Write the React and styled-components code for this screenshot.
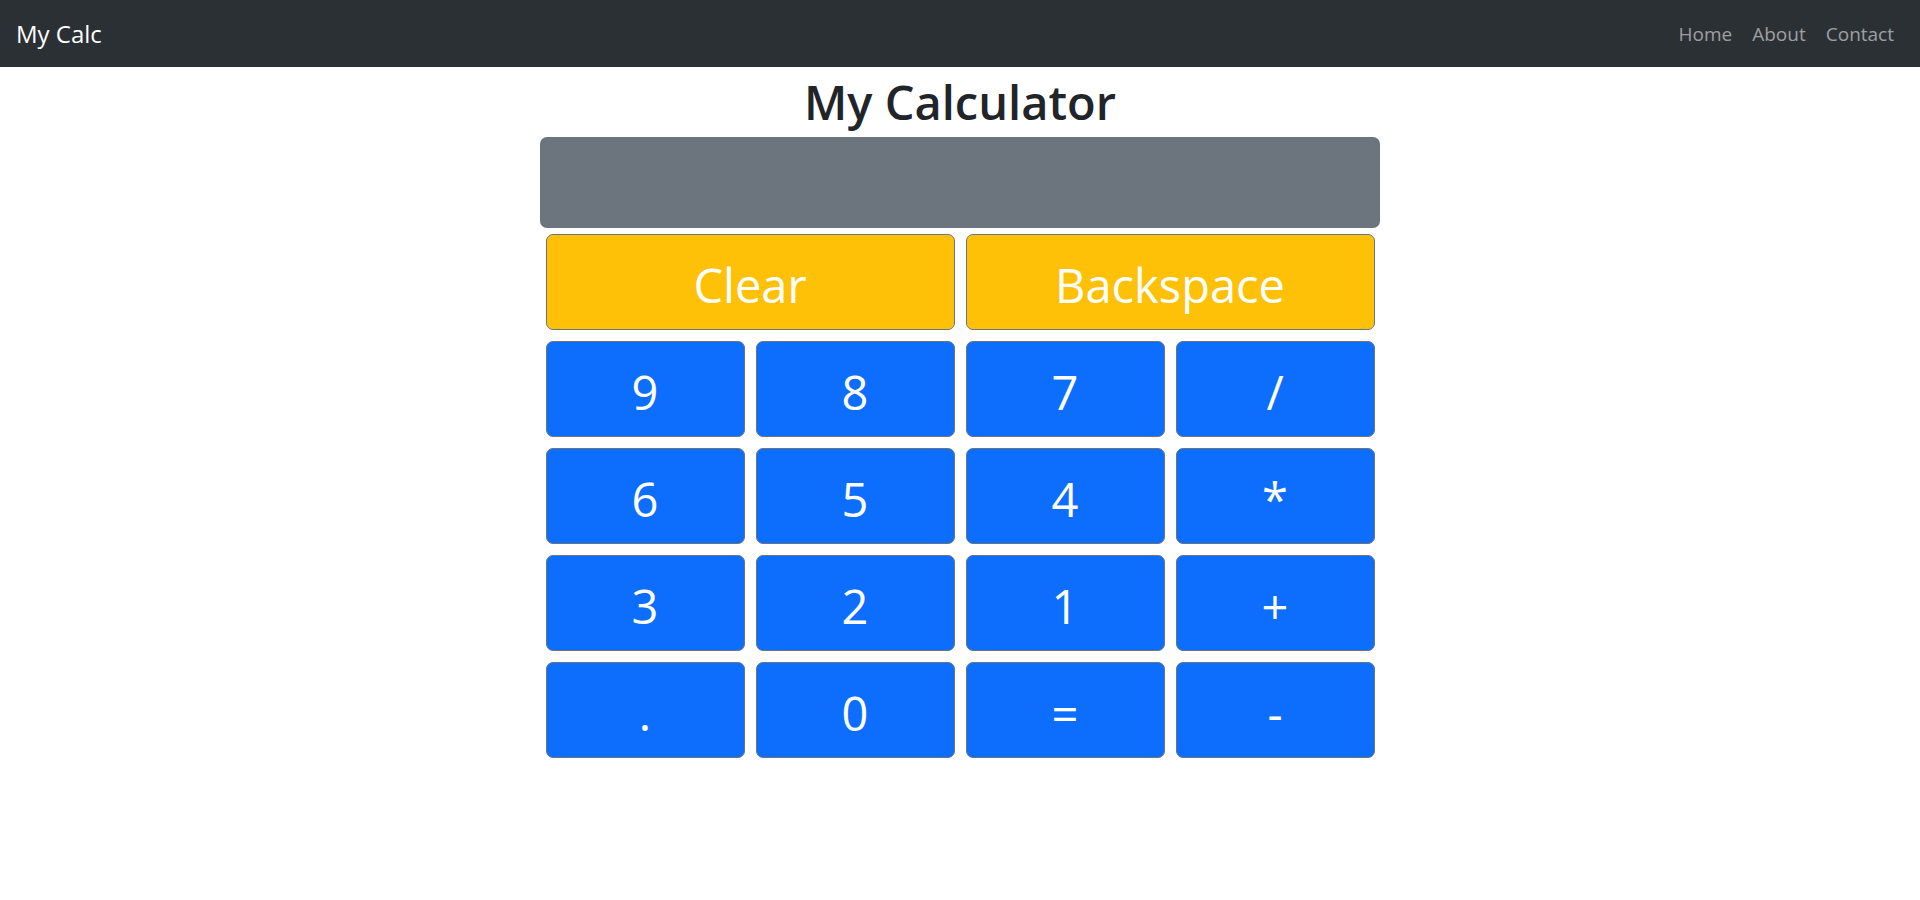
import React, { useState } from "react"
import { styled, createGlobalStyle } from "styled-components"

const GlobalStyle = createGlobalStyle`
  body {
    margin: 0;
    font-family: "Open Sans", "Noto Sans", sans-serif;
    color: #212529;
    background: #fff;
  }
`

const keys = ["9", "8", "7", "/", "6", "5", "4", "*", "3", "2", "1", "+", ".", "0", "=", "-"]

function App() {
  const [value, setValue] = useState("")

  const press = (k) => {
    if (k === "=") {
      try {
        // eslint-disable-next-line no-eval
        setValue(String(eval(value)))
      } catch {
        setValue("Error")
      }
      return
    }
    setValue(value + k)
  }

  return (
    <>
      <GlobalStyle />
      <NavBar>
        <Brand href="#">My Calc</Brand>
        <NavLinks>
          <NavLink href="#">Home</NavLink>
          <NavLink href="#">About</NavLink>
          <NavLink href="#">Contact</NavLink>
        </NavLinks>
      </NavBar>
      <Main>
        <Title>My Calculator</Title>
        <Display>{value}</Display>
        <Keypad>
          <KeyButton $variant="warning" $wide onClick={() => setValue("")}>
            Clear
          </KeyButton>
          <KeyButton $variant="warning" $wide onClick={() => setValue(value.slice(0, -1))}>
            Backspace
          </KeyButton>
          {keys.map((k) => (
            <KeyButton key={k} onClick={() => press(k)}>
              {k}
            </KeyButton>
          ))}
        </Keypad>
      </Main>
    </>
  )
}

const NavBar = styled.nav`
  height: 67px;
  padding: 0 16px;
  background-color: #2b3035;
  display: flex;
  align-items: center;
  justify-content: space-between;
`

const Brand = styled.a`
  color: #fff;
  font-size: 24px;
  text-decoration: none;
`

const NavLinks = styled.div`
  display: flex;
  align-items: center;
`

const NavLink = styled.a`
  color: rgba(255, 255, 255, 0.55);
  font-size: 19px;
  padding: 0 10px;
  text-decoration: none;
`

const Main = styled.main`
  width: 840px;
  margin: 0 auto;
`

const Title = styled.h1`
  margin: 0;
  font-size: 47px;
  font-weight: 600;
  line-height: 70px;
  text-align: center;
  color: #212529;
`

const Display = styled.div`
  height: 91px;
  border-radius: 7px;
  background-color: #6c757d;
  color: #fff;
  font-size: 48px;
  display: flex;
  align-items: center;
  justify-content: flex-end;
  padding: 0 20px;
  box-sizing: border-box;
`

const Keypad = styled.div`
  margin-top: 6px;
  display: grid;
  grid-template-columns: repeat(4, 199px);
  grid-auto-rows: 96px;
  gap: 11px;
  justify-content: center;
`

const KeyButton = styled.button`
  grid-column: ${(props) => (props.$wide ? "span 2" : "auto")};
  border: 1px solid #6c757d;
  border-radius: 7px;
  background-color: ${(props) => (props.$variant === "warning" ? "#ffc107" : "#0d6efd")};
  color: #fff;
  font-family: "Open Sans", "Noto Sans", sans-serif;
  font-size: 47px;
  cursor: pointer;
  padding: 5px 0 0;
`

export default App
